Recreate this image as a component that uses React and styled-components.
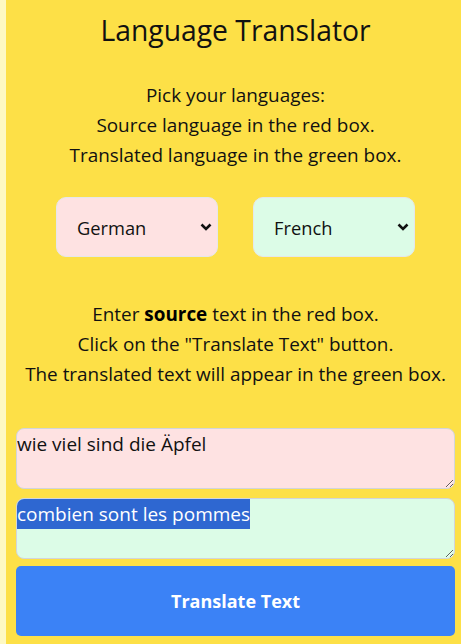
import React, { useEffect, useRef } from 'react';
import styled, { createGlobalStyle } from 'styled-components';

const GlobalStyle = createGlobalStyle`
  html, body {
    margin: 0;
    padding: 0;
    overflow: hidden;
    background: #fef9c3;
  }
  body {
    font-family: "Open Sans", "Noto Sans", sans-serif;
    color: #111;
  }
`;

const App = () => {
  const outputRef = useRef(null);

  useEffect(() => {
    const el = outputRef.current;
    if (el) {
      el.focus();
      el.select();
    }
  }, []);

  return (
    <Page>
      <GlobalStyle />
      <Title>Language Translator</Title>
      <Text>
        Pick your languages:<br />
        Source language in the red box.<br />
        Translated language in the green box.
      </Text>
      <SelectRow>
        <SelectWrap>
          <Select tone="red" defaultValue="de">
            <option value="de">German</option>
            <option value="fr">French</option>
            <option value="en">English</option>
          </Select>
          <Chevron />
        </SelectWrap>
        <SelectWrap>
          <Select tone="green" defaultValue="fr">
            <option value="de">German</option>
            <option value="fr">French</option>
            <option value="en">English</option>
          </Select>
          <Chevron />
        </SelectWrap>
      </SelectRow>
      <Text spaced>
        Enter <b>source</b> text in the red box.<br />
        Click on the "Translate Text" button.<br />
        The translated text will appear in the green box.
      </Text>
      <Area tone="red" defaultValue="wie viel sind die Äpfel" />
      <Area tone="green" ref={outputRef} defaultValue="combien sont les pommes" readOnly />
      <Button>Translate Text</Button>
    </Page>
  );
};

const Chevron = () => (
  <ChevronIcon width="12" height="8" viewBox="0 0 12 8">
    <path d="M1.5 1.5 L6 6 L10.5 1.5" fill="none" stroke="#111" strokeWidth="2.6" />
  </ChevronIcon>
);

const Page = styled.div`
  width: 439px;
  min-height: 644px;
  margin-left: 6px;
  padding: 12px 10px 0;
  background: #fde047;
  display: flex;
  flex-direction: column;
`;

const Title = styled.h1`
  margin: 0;
  font-size: 28.3px;
  font-weight: 400;
  line-height: 36px;
  text-align: center;
`;

const Text = styled.p`
  margin: ${({ spaced }) => (spaced ? '42px 0 0' : '32px 0 0')};
  font-size: 18.9px;
  line-height: 30px;
  text-align: center;

  b {
    font-weight: 700;
    color: #000;
  }
`;

const SelectRow = styled.div`
  display: flex;
  justify-content: center;
  gap: 35px;
  margin-top: 27px;
`;

const SelectWrap = styled.div`
  position: relative;
  width: 162px;
  height: 60px;
`;

const Select = styled.select`
  appearance: none;
  width: 100%;
  height: 100%;
  padding: 0 0 0 20px;
  border: 1px solid #e5e7eb;
  border-radius: 10px;
  background: ${({ tone }) => (tone === 'red' ? '#fee2e2' : '#dcfce7')};
  font-family: inherit;
  font-size: 18.3px;
  color: #111;
  outline: none;
`;

const ChevronIcon = styled.svg`
  position: absolute;
  right: 6px;
  top: 26px;
  pointer-events: none;
`;

const Area = styled.textarea`
  box-sizing: border-box;
  display: block;
  width: 100%;
  height: 61px;
  margin-top: ${({ tone }) => (tone === 'red' ? '39px' : '9px')};
  padding: 0;
  border: 1px solid #d1d5db;
  border-radius: 8px;
  background: ${({ tone }) => (tone === 'red' ? '#fee2e2' : '#dcfce7')};
  font-family: inherit;
  font-size: 19px;
  line-height: 30px;
  color: #111;
  outline: none;

  &::selection {
    background: #2e67d1;
    color: #fff;
  }
`;

const Button = styled.button`
  height: 70px;
  margin-top: 7px;
  border: none;
  border-radius: 5px;
  background: #3b82f6;
  color: #fff;
  font-family: inherit;
  font-size: 18px;
  font-weight: 700;
`;

export default App;
